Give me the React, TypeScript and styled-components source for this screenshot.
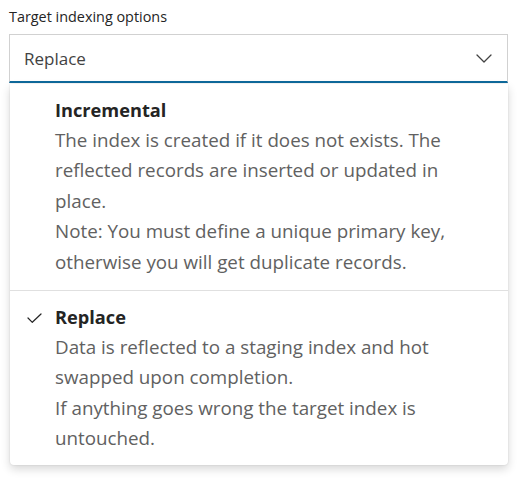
import styled, { createGlobalStyle } from 'styled-components'

const GlobalStyle = createGlobalStyle`
  html, body {
    margin: 0;
    padding: 0;
    background: #ffffff;
    font-family: "Open Sans", "Noto Sans", sans-serif;
  }
`

const Page = styled.div`
  width: 527px;
  height: 484px;
  padding: 7px 19px 0 9px;
  box-sizing: border-box;
  background: #ffffff;
`

const Label = styled.div`
  font-size: 14.4px;
  line-height: 19px;
  color: #242424;
  margin-bottom: 8px;
`

const Field = styled.div`
  height: 49px;
  box-sizing: border-box;
  border: 1px solid #d1d1d1;
  border-bottom: 2px solid #0f6a9c;
  display: flex;
  align-items: center;
  justify-content: space-between;
  padding: 0 15px 0 14px;
  background: #fff;
`

const Value = styled.span`
  font-size: 17px;
  color: #424242;
`

const Menu = styled.div`
  margin: 1px 0 0 1px;
  background: #fff;
  border-radius: 0 0 4px 4px;
  box-shadow: 0 0 2px rgba(0, 0, 0, 0.12), 0 4px 10px rgba(0, 0, 0, 0.16);
  display: flex;
  flex-direction: column;
`

const Option = styled.div<{ $divider?: boolean }>`
  display: grid;
  grid-template-columns: 45px 1fr;
  padding: ${(p) => (p.$divider ? '11px 38px 11px 0' : '11px 38px 13px 0')};
  border-top: ${(p) => (p.$divider ? '1px solid #e0e0e0' : 'none')};
`

const Check = styled.div`
  display: flex;
  justify-content: flex-end;
  padding: 11px 13px 0 0;
`

const Title = styled.div`
  font-size: 18.2px;
  font-weight: 700;
  line-height: 30px;
  color: #242424;
`

const Desc = styled.div`
  font-size: 18.8px;
  line-height: 30.4px;
  color: #616161;
`

const Chevron = () => (
  <svg width="16" height="9" viewBox="0 0 16 9" fill="none">
    <path d="M1 1l7 7 7-7" stroke="#424242" strokeWidth="1.3" strokeLinecap="round" strokeLinejoin="round" />
  </svg>
)

const CheckMark = () => (
  <svg width="15" height="10" viewBox="0 0 15 10" fill="none">
    <path d="M1 5l4.3 4.3L14 1" stroke="#242424" strokeWidth="1.2" strokeLinecap="round" strokeLinejoin="round" />
  </svg>
)

const opcoes = [
  {
    titulo: 'Incremental',
    linhas: [
      'The index is created if it does not exists. The reflected records are inserted or updated in place.',
      'Note: You must define a unique primary key, otherwise you will get duplicate records.',
    ],
    selecionado: false,
  },
  {
    titulo: 'Replace',
    linhas: [
      'Data is reflected to a staging index and hot swapped upon completion.',
      'If anything goes wrong the target index is untouched.',
    ],
    selecionado: true,
  },
]

const App = () => (
  <>
    <GlobalStyle />
    <Page>
      <Label>Target indexing options</Label>
      <Field>
        <Value>Replace</Value>
        <Chevron />
      </Field>
      <Menu>
        {opcoes.map((o, i) => (
          <Option key={o.titulo} $divider={i > 0}>
            <Check>{o.selecionado && <CheckMark />}</Check>
            <div>
              <Title>{o.titulo}</Title>
              {o.linhas.map((l) => (
                <Desc key={l}>{l}</Desc>
              ))}
            </div>
          </Option>
        ))}
      </Menu>
    </Page>
  </>
)

export default App
